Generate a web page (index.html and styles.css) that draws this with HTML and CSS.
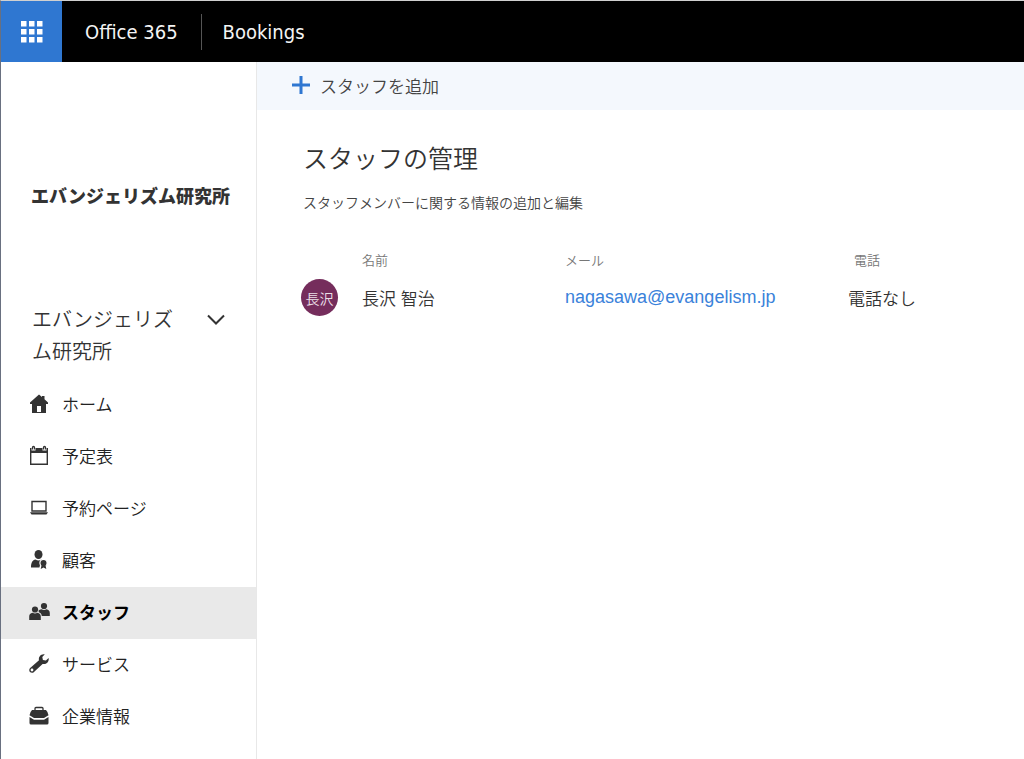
FILE: index.html
```html
<!DOCTYPE html>
<html lang="ja">
<head>
<meta charset="utf-8">
<title>Bookings</title>
<link rel="stylesheet" href="styles.css">
</head>
<body>
<header class="topbar">
  <button class="launcher" aria-label="アプリ起動ツール">
    <svg width="22" height="22" viewBox="0 0 22 22" fill="#fff"><path d="M0 0h5.500v5.500H0zM8 0h5.500v5.500H8zM16 0h5.500v5.500H16zM0 8h5.500v5.500H0zM8 8h5.500v5.500H8zM16 8h5.500v5.500H16zM0 16h5.500v5.500H0zM8 16h5.500v5.500H8zM16 16h5.500v5.500H16z"/></svg>
  </button>
  <a class="suite" href="#">Office 365</a>
  <a class="product" href="#">Bookings</a>
</header>
<div class="shell">
  <aside class="sidebar">
    <div class="logo">エバンジェリズム研究所</div>
    <button class="company">
      <span class="company-name">エバンジェリズム研究所</span>
      <svg class="chevron" width="18" height="12" viewBox="0 0 18 12" fill="none" stroke="#333" stroke-width="2"><path d="M1 1.500l8 8 8-8"/></svg>
    </button>
    <nav class="nav">
      <a class="nav-item" href="#">
        <svg class="icon" viewBox="0 0 22 22" fill="#333"><path fill-rule="evenodd" d="M11 1.500L14 4V3h2.500v3.200L20 9.500v1.500h-2V20H4v-9H2V9.500zM9 13v6h4v-6z"/></svg>
        <span>ホーム</span></a>
      <a class="nav-item" href="#">
        <svg class="icon" viewBox="0 0 22 22"><path fill="none" stroke="#333" stroke-width="1.400" d="M2.700 4v15.300h16.600V4"/><path fill="#333" d="M2 3h18v5H2z"/><path fill="#fff" d="M3.500 1h4v4.500h-4zM14.500 1h4v4.500h-4z"/><path fill="none" stroke="#333" stroke-width="1.300" d="M4.500 4.500V2.500a1 1 0 0 1 2 0v2M15.500 4.500V2.500a1 1 0 0 1 2 0v2"/></svg>
        <span>予定表</span></a>
      <a class="nav-item" href="#">
        <svg class="icon" viewBox="0 0 22 22"><path fill="none" stroke="#333" stroke-width="1.400" d="M4 4.500h14v9.500H4z"/><path fill="#333" d="M2 15.300h18l-1.500 2.200h-15z"/></svg>
        <span>予約ページ</span></a>
      <a class="nav-item" href="#">
        <svg class="icon" viewBox="0 0 22 22" fill="#333"><ellipse cx="10.500" cy="5.500" rx="4" ry="4.500"/><path d="M3 18.500c0-5 1.500-7.500 4.500-8 2 1.300 4 1.300 6 0l2 1v7z"/><path stroke="#fff" stroke-width="2" d="M13 16h5l1 5-3.500-2-3.500 2z"/><circle cx="15.500" cy="14" r="3.600" stroke="#fff" stroke-width="1.200"/><path d="M13.700 15.500h3.600l1 4.500-2.800-1.500-2.800 1.500z"/></svg>
        <span>顧客</span></a>
      <a class="nav-item nav-item-selected" href="#" aria-current="page">
        <svg class="icon" viewBox="0 0 22 22" fill="#333"><circle cx="7" cy="8.500" r="3.100"/><path d="M1.200 19v-3.500c0-2.300 1.300-3.500 3.300-3.800 1.700 1.100 3.300 1.100 5 0 2 .3 3.300 1.500 3.300 3.800V19z"/><circle cx="16" cy="5" r="3.100"/><path d="M10.500 9.500c.7-.8 1.700-1.200 3-1.300 1.700 1.100 3.300 1.100 5 0 2 .3 3.300 1.500 3.300 3.800V15h-8c-.3-2-1.300-3.200-3-3.700z"/></svg>
        <span>スタッフ</span></a>
      <a class="nav-item" href="#">
        <svg class="icon" viewBox="0 0 22 22"><path fill="#333" fill-rule="evenodd" d="M16.800 1.300l-2.500 2.800.6 3 3 .5 2.700-2.600c.8 3.600-2.200 7-6 5.900L6.500 18.500c-1.500 2.500-5.800 1.300-5.200-2 .2-1 .8-1.700 1.700-2.200l8-7C10.200 3.800 13 .5 16.800 1.300zM4 15.600a1.400 1.400 0 1 0 0 2.800 1.400 1.400 0 0 0 0-2.800z"/></svg>
        <span>サービス</span></a>
      <a class="nav-item" href="#">
        <svg class="icon" viewBox="0 0 22 22"><path fill="none" stroke="#333" stroke-width="1.300" d="M7 6V3.500q0-1 1-1h6q1 0 1 1V6"/><path fill="#333" d="M4 5h14q2 2 2.500 5.200l-4.500 2.700H6l-4.500-2.700Q2 7 4 5z"/><path fill="#333" d="M1.500 11.900L6 14.700h10l4.500-2.800V18q0 1.500-1.500 1.500H3q-1.500 0-1.500-1.500z"/></svg>
        <span>企業情報</span></a>
    </nav>
  </aside>
  <main class="main">
    <div class="commands">
      <button class="add">
        <svg width="18" height="18" viewBox="0 0 18 18" fill="#2f77d1"><path d="M7.500 0h3v7.500H18v3h-7.500V18h-3v-7.500H0v-3h7.500z"/></svg>
        <span>スタッフを追加</span>
      </button>
    </div>
    <section class="content">
      <h1 class="title">スタッフの管理</h1>
      <p class="lead">スタッフメンバーに関する情報の追加と編集</p>
      <table class="staff">
        <colgroup><col class="col-avatar"><col class="col-name"><col class="col-mail"><col></colgroup>
        <thead>
          <tr><td></td><th scope="col">名前</th><th scope="col">メール</th><th scope="col" class="phone-head">電話</th></tr>
        </thead>
        <tbody>
          <tr><td><span class="avatar">長沢</span></td><td>長沢 智治</td><td><a class="mail" href="mailto:nagasawa@evangelism.jp">nagasawa@evangelism.jp</a></td><td>電話なし</td></tr>
        </tbody>
      </table>
    </section>
  </main>
</div>
</body>
</html>
```
FILE: styles.css
```css
* { box-sizing: border-box; }
body {
  margin: 0;
  min-height: 100vh;
  display: flex;
  flex-direction: column;
  border-left: 1px solid #697080;
  border-top: 1px solid #d0d0d0;
  background: #fff;
  color: #333;
  font-family: "Liberation Sans", "Noto Sans CJK JP", sans-serif;
  font-size: 17px;
  font-weight: 350;
}
button {
  border: 0;
  padding: 0;
  background: none;
  color: inherit;
  font: inherit;
  text-align: left;
}
a { color: inherit; text-decoration: none; }
.topbar {
  display: flex;
  align-items: center;
  height: 61px;
  background: #000;
  color: #f4f4f4;
  font-family: "DejaVu Sans Condensed", "DejaVu Sans", sans-serif;
  font-size: 20px;
  font-weight: 400;
}
.launcher {
  display: flex;
  align-items: center;
  justify-content: center;
  width: 61px;
  height: 61px;
  background: #2f77d1;
}
.suite {
  padding: 0 23px;
  border-right: 1px solid #555;
  line-height: 36px;
}
.product { padding-left: 21px; }
.shell { display: flex; flex: 1; }
.sidebar {
  flex: none;
  width: 256px;
  border-right: 1px solid #e8e8e8;
}
.logo {
  padding: 121px 0 0 30px;
  font-size: 18px;
  font-weight: 900;
  line-height: 28px;
  white-space: nowrap;
}
.company {
  display: flex;
  align-items: flex-start;
  justify-content: space-between;
  width: 100%;
  padding: 93px 31px 11px 31px;
  font-size: 20px;
  line-height: 32px;
}
.company-name { width: 148px; }
.chevron { margin-top: 10px; }
.nav-item {
  display: flex;
  align-items: center;
  gap: 12px;
  height: 52px;
  padding: 0 0 4px 27px;
  color: #222;
}
.nav-item-selected {
  background: #e9e9e9;
  color: #000;
  font-weight: 700;
}
.icon { width: 22px; height: 22px; margin-top: 2px; }
.main { flex: 1; min-width: 0; }
.commands {
  display: flex;
  align-items: center;
  height: 48px;
  padding: 0 0 2px 35px;
  background: #f4f8fd;
}
.add {
  display: flex;
  align-items: center;
  gap: 10px;
  color: #444;
}
.content { padding: 29px 44px; }
.title {
  margin: 0;
  padding-left: 2px;
  font-size: 25px;
  font-weight: 350;
  line-height: 40px;
}
.lead {
  margin: 12px 0 35px;
  padding-left: 2px;
  color: #444;
  font-size: 14px;
  line-height: 24px;
}
.staff {
  width: 100%;
  border-collapse: collapse;
  table-layout: fixed;
}
.staff td { padding: 0; }
.staff th {
  padding: 1px 0 8px;
  color: #777;
  font-size: 13px;
  font-weight: 350;
  line-height: 20px;
  text-align: left;
}
.staff .phone-head { padding-left: 6px; }
.col-avatar { width: 61px; }
.col-name { width: 203px; }
.col-mail { width: 283px; }
.avatar {
  display: flex;
  align-items: center;
  justify-content: center;
  width: 37px;
  height: 37px;
  border-radius: 50%;
  background: #752d5c;
  color: #eadfe6;
  font-size: 14px;
}
.mail { color: #3a82da; font-size: 18px; }
```
